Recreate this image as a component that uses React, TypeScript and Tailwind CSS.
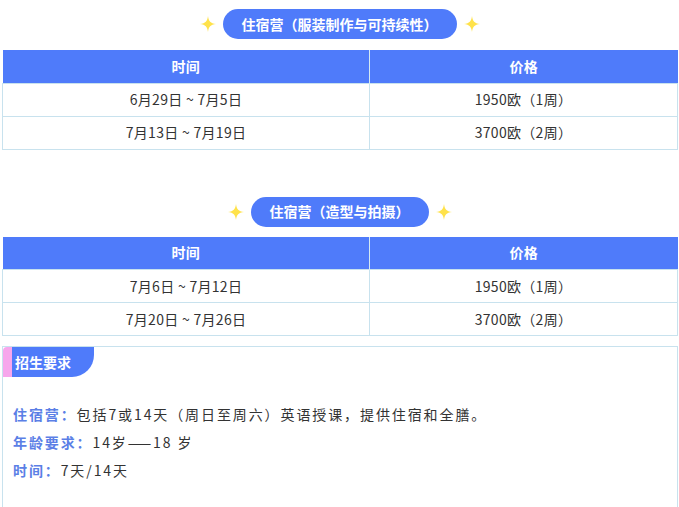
import React from "react";

const font = { fontFamily: '"Noto Sans CJK SC", "Noto Sans", sans-serif' };

function Sparkle() {
  return (
    <svg width="16" height="16" viewBox="0 0 20 20" className="shrink-0">
      <path d="M10 0 C11 7 13 9 20 10 C13 11 11 13 10 20 C9 13 7 11 0 10 C7 9 9 7 10 0 Z" fill="#ffe24a" />
    </svg>
  );
}

function Pill({ text }: { text: string }) {
  return (
    <div className="flex items-center justify-center gap-[7px]">
      <Sparkle />
      <div className="h-[30px] px-[19px] rounded-full bg-[#4f7bfa] text-white font-bold text-[14px] flex items-center">
        {text}
      </div>
      <Sparkle />
    </div>
  );
}

function Table({ rows }: { rows: [string, string][] }) {
  return (
    <table className="w-[676px] ml-[2px] border-collapse text-[14px] text-[#333] tracking-[0.3px]">
      <colgroup>
        <col className="w-[367px]" />
        <col />
      </colgroup>
      <thead>
        <tr className="h-[33px] bg-[#4f7bfa] text-white font-bold">
          <th className="border-r border-[#d4e9f2] font-bold">时间</th>
          <th className="font-bold">价格</th>
        </tr>
      </thead>
      <tbody>
        {rows.map((r, i) => (
          <tr key={i} className="h-[33px]">
            <td className="border border-[#c8e2ee] text-center">{r[0]}</td>
            <td className="border border-[#c8e2ee] text-center">{r[1]}</td>
          </tr>
        ))}
      </tbody>
    </table>
  );
}

export default function App() {
  return (
    <div className="w-[679px] h-[507px] bg-white overflow-hidden" style={font}>
      <div className="pt-[9px]">
        <Pill text="住宿营（服装制作与可持续性）" />
      </div>
      <div className="mt-[11px]">
        <Table
          rows={[
            ["6月29日 ~ 7月5日", "1950欧（1周）"],
            ["7月13日 ~ 7月19日", "3700欧（2周）"],
          ]}
        />
      </div>
      <div className="mt-[47px]">
        <Pill text="住宿营（造型与拍摄）" />
      </div>
      <div className="mt-[10px]">
        <Table
          rows={[
            ["7月6日 ~ 7月12日", "1950欧（1周）"],
            ["7月20日 ~ 7月26日", "3700欧（2周）"],
          ]}
        />
      </div>
      <div className="mt-[10px] ml-[2px] w-[676px] h-[200px] border border-[#c8e2ee]">
        <div className="flex h-[30px]">
          <div className="w-[9px] bg-[#f7a6ec] rounded-tl-[4px]" />
          <div className="w-[82px] bg-[#4f7bfa] rounded-br-[22px] text-white font-bold text-[14px] flex items-center pl-[3px]">
            招生要求
          </div>
        </div>
        <div className="pl-[10px] pt-[23px] text-[14px] leading-[28px] tracking-[1.9px] text-[#333]">
          <p>
            <span className="text-[#5b7fe6] font-bold">住宿营：</span>包括7或14天（周日至周六）英语授课，提供住宿和全膳。
          </p>
          <p>
            <span className="text-[#5b7fe6] font-bold">年龄要求：</span>14岁——18 岁
          </p>
          <p>
            <span className="text-[#5b7fe6] font-bold">时间：</span>7天/14天
          </p>
        </div>
      </div>
    </div>
  );
}
